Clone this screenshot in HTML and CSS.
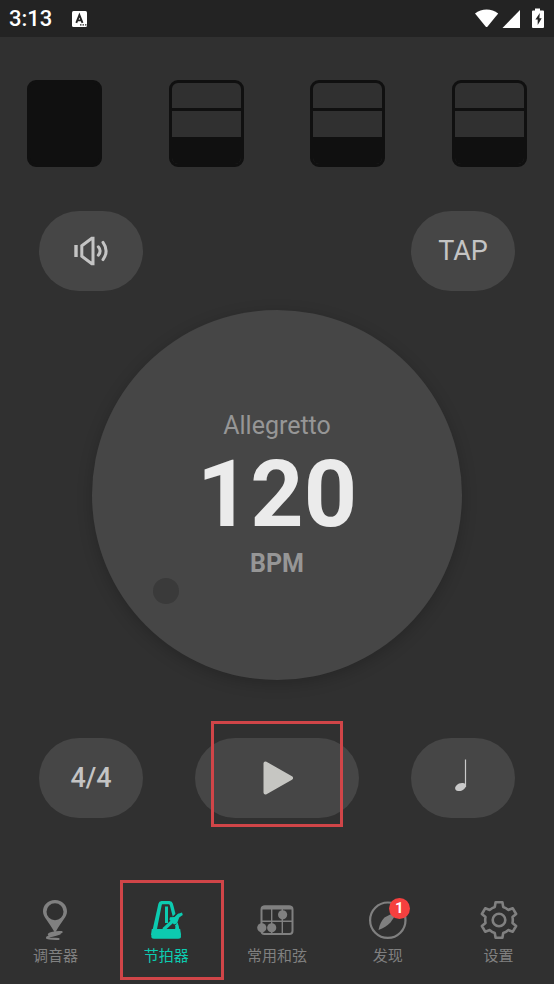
FILE: index.html
```html
<!DOCTYPE html>
<html lang="zh-CN">
<head>
<meta charset="utf-8">
<meta name="viewport" content="width=device-width, initial-scale=1">
<title>节拍器</title>
<link rel="stylesheet" href="styles.css">
</head>
<body>
<header class="status">
  <time class="clock">3:13</time>
  <svg class="app-badge" width="15" height="16" viewBox="0 0 15 16" aria-hidden="true">
    <rect width="15" height="16" rx="1.5" fill="#fff"/>
    <path d="M4.3 11.8 7.4 4l3.1 7.8M5.4 9.4h4" fill="none" stroke="#232323" stroke-width="1.9"/>
    <path d="M8 13.9h1.5m1 0H12m1 0h1.5" stroke="#232323" stroke-width="1.2"/>
  </svg>
  <svg class="signals" width="70" height="20" viewBox="0 0 70 20" aria-hidden="true">
    <path d="M1 4.6C7.600-.8 17.600-.8 24.200 4.600L13.600 17.400q-1 1-2 0Z" fill="#fff"/>
    <path d="M46 1v18H28.500Z" fill="#fff"/>
    <path d="M61-.5h5v2h3q1 0 1 1V18q0 1-1 1H59q-1 0-1-1V2.500q0-1 1-1h2Z" fill="#fff"/>
    <path d="m65.800 4-4.400 6.500h2.300v5.500l4-6.800h-2.300Z" fill="#232323"/>
  </svg>
</header>

<main class="metronome">
  <div class="beats">
    <button class="beat beat-full" aria-label="1"></button>
    <button class="beat" aria-label="2"><span class="level"></span><span class="level"></span><span class="level level-on"></span></button>
    <button class="beat" aria-label="3"><span class="level"></span><span class="level"></span><span class="level level-on"></span></button>
    <button class="beat" aria-label="4"><span class="level"></span><span class="level"></span><span class="level level-on"></span></button>
  </div>

  <div class="controls controls-top">
    <button class="pill" aria-label="音量">
      <svg width="36" height="30" viewBox="0 0 36 30" fill="none" stroke="#c4c4c4" stroke-width="3">
        <path d="M3 9v12" stroke-width="3.400"/>
        <path d="M8.800 9.700 18.800 2.300h1.200v25.400h-1.200L8.800 20.300Z"/>
        <path d="M25.300 10.800q3.600 4.200 0 8.400" stroke-width="3" stroke-linecap="round"/>
        <path d="M30 6.400q6.200 8.600 0 17.200" stroke-width="3" stroke-linecap="round"/>
      </svg>
    </button>
    <button class="pill pill-text">TAP</button>
  </div>

  <section class="dial">
    <p class="tempo-name">Allegretto</p>
    <p class="tempo">120</p>
    <p class="unit">BPM</p>
    <span class="knob"></span>
  </section>

  <div class="controls controls-bottom">
    <button class="pill pill-text pill-medium">4/4</button>
    <button class="pill pill-wide" aria-label="播放">
      <svg width="32" height="36" viewBox="0 0 32 36" aria-hidden="true">
        <path d="M4.500 3.500v29L30 18Z" fill="#c6c6c2" stroke="#c6c6c2" stroke-width="4" stroke-linejoin="round"/>
      </svg>
      <span class="mark mark-play"></span>
    </button>
    <button class="pill" aria-label="四分音符">
      <svg width="18" height="36" viewBox="0 0 18 36" aria-hidden="true">
        <path d="M11.500-.5V27" stroke="#c9c9c9" stroke-width="1.200"/>
        <ellipse cx="6.500" cy="27" rx="5.700" ry="3.700" fill="#c9c9c9" transform="rotate(-24 6.500 27)"/>
      </svg>
    </button>
  </div>
</main>

<nav class="tabs">
  <a class="tab" href="#tuner">
    <svg class="tab-icon" viewBox="0 0 40 40" aria-hidden="true">
      <path fill-rule="evenodd" fill="#808080" d="M20 0C12.800 0 8 5.200 8 11.600 8 17 13.200 21 19.300 31.700q.7 1 1.400 0C26.800 21 32 17 32 11.600 32 5.200 27.200 0 20 0Zm0 3.300a8.500 8.500 0 1 1 0 17 8.500 8.500 0 0 1 0-17Z"/>
      <path fill="none" stroke="#808080" stroke-width="2.200" stroke-linecap="round" stroke-linejoin="round" d="M26.500 32.200C21 31.600 13 33.500 14 34.700c1.500 1 7-.7 10.800-1.200C20 35.700 11.500 36.500 12 38c.6 1 6 .9 11.500 1"/>
    </svg>
    <span>调音器</span>
  </a>
  <a class="tab tab-active" href="#metronome" aria-current="page">
    <svg class="tab-icon" viewBox="0 0 40 40" aria-hidden="true">
      <path fill="#0ccbb0" d="M15.500 1h8q2.700 0 3.400 2.700l8 31.500q.7 3.500-2.700 3.500H8q-3.300 0-2.600-3.500l7-31.500Q13 1 15.500 1Z"/>
      <path fill="#303030" d="M16.500 4.300h6.200q.9 0 1.100.9L30 29H11l4.700-23.800q.1-.9.800-.9Z"/>
      <path d="M18 30 37 12.500" stroke="#303030" stroke-width="8"/>
      <path d="M20.500 6.500V23" stroke="#0ccbb0" stroke-width="3"/>
      <path d="M5.800 29h28.400l.8 6H5ZM29 29l2.500-6.500 1.500 6.500Z" fill="#0ccbb0"/>
      <path d="m17.500 29.500 16-14.800" stroke="#0ccbb0" stroke-width="3.400"/>
      <path d="m32.300 13.800 3.700-1.400.8 2.600-3.500 2.300-2.300 6.100-3 1.200-4.600-5 .6-2.400 5.300-.2Z" fill="#0ccbb0"/>
    </svg>
    <span>节拍器</span>
    <span class="mark mark-tab"></span>
  </a>
  <a class="tab" href="#chords">
    <svg class="tab-icon" viewBox="0 0 40 40" aria-hidden="true">
      <rect x="4.500" y="6.500" width="31" height="27.500" rx="3" fill="none" stroke="#808080" stroke-width="2"/>
      <path d="M4 9.500q0-4 4-4h24q4 0 4 4Z" fill="#808080"/>
      <path d="M14.700 8v26M25.300 8v26M4 21.300h32" stroke="#808080" stroke-width="1.400"/>
      <circle cx="25.600" cy="14.800" r="4.600" fill="#808080"/>
      <circle cx="4.800" cy="27.800" r="4.600" fill="#808080"/>
      <circle cx="14.700" cy="27.800" r="4.600" fill="#808080"/>
    </svg>
    <span>常用和弦</span>
  </a>
  <a class="tab" href="#discover">
    <span class="icon-wrap">
      <svg class="tab-icon" viewBox="0 0 40 40" aria-hidden="true">
        <circle cx="19.800" cy="20.200" r="17.700" fill="none" stroke="#808080" stroke-width="2.200"/>
        <path d="M10.500 30Q12 22 16.500 17.500L31 10 22.500 22.500Q18 27 10.500 30Z" fill="#808080"/>
      </svg>
      <span class="badge">1</span>
    </span>
    <span>发现</span>
  </a>
  <a class="tab" href="#settings">
    <svg class="tab-icon" viewBox="0 0 40 40" fill="none" stroke="#808080" stroke-width="2.600" stroke-linejoin="round" aria-hidden="true">
      <path d="M16.600 2.300h6.800l.8 4.600q3 1 5 3l4.600-1.600 3.300 5.700-3.600 3q.6 3 0 6l3.600 3-3.300 5.700-4.600-1.600q-2 2-5 3l-.8 4.600h-6.800l-.8-4.600q-3-1-5-3l-4.600 1.600L2.900 26l3.600-3q-.6-3 0-6l-3.600-3 3.300-5.700 4.600 1.600q2-2 5-3Z"/>
      <circle cx="20" cy="20" r="6.300"/>
    </svg>
    <span>设置</span>
  </a>
</nav>
</body>
</html>
```
FILE: styles.css
```css
* {
  box-sizing: border-box;
}

body {
  margin: 0;
  min-height: 100vh;
  display: flex;
  flex-direction: column;
  background: #303030;
  color: #c4c4c4;
  font-family: Roboto, "Noto Sans CJK SC", sans-serif;
}

button {
  margin: 0;
  padding: 0;
  border: 0;
  color: inherit;
  font: inherit;
}

p {
  margin: 0;
}

svg {
  display: block;
  overflow: visible;
}

.status {
  display: flex;
  align-items: center;
  height: 37px;
  padding: 0 10px 0 9px;
  background: #232323;
  color: #fff;
}

.clock {
  font-size: 22px;
  font-weight: 500;
  line-height: 24px;
}

.app-badge {
  margin-left: 20px;
}

.signals {
  margin-left: auto;
}

.metronome {
  display: flex;
  flex-direction: column;
}

.beats {
  display: flex;
  justify-content: space-between;
  margin-top: 43px;
  padding: 0 27px;
}

.beat {
  display: grid;
  grid-template-rows: 25fr 29fr 27fr;
  width: 75px;
  height: 87px;
  overflow: hidden;
  border: 3px solid #101010;
  border-radius: 9px;
  background: #303030;
}

.beat-full {
  background: #101010;
}

.level + .level {
  border-top: 3px solid #101010;
}

.level-on {
  background: #101010;
}

.controls {
  display: flex;
  justify-content: space-between;
  padding: 0 39px;
}

.controls-top {
  margin-top: 44px;
}

.controls-bottom {
  margin-top: 58px;
}

.pill {
  position: relative;
  display: flex;
  align-items: center;
  justify-content: center;
  width: 104px;
  height: 80px;
  border-radius: 40px;
  background: #464646;
}

.pill-wide {
  width: 164px;
}

.pill-text {
  padding-bottom: 1px;
  font-size: 27px;
}

.pill-medium {
  font-weight: 500;
}

.dial {
  position: relative;
  display: flex;
  flex-direction: column;
  align-items: center;
  gap: 6px;
  align-self: center;
  width: 370px;
  height: 370px;
  margin-top: 19px;
  padding-top: 100px;
  border-radius: 50%;
  background: #464646;
  box-shadow: 0 4px 16px rgba(0, 0, 0, 0.2);
}

.tempo-name,
.unit {
  color: #969696;
  font-size: 25px;
  line-height: 32px;
}

.unit {
  font-weight: 700;
}

.tempo {
  color: #ebebeb;
  font-size: 93px;
  font-weight: 700;
  line-height: 94px;
}

.knob {
  position: absolute;
  left: 20%;
  top: 76%;
  width: 26px;
  height: 26px;
  border-radius: 50%;
  background: #3a3a3a;
  transform: translate(-50%, -50%);
}

.mark {
  position: absolute;
  border: 3px solid #d04548;
  pointer-events: none;
}

.mark-play {
  inset: -17px 16px -9px;
}

.mark-tab {
  inset: -20px -2px -14px 9px;
}

.tabs {
  display: grid;
  grid-template-columns: repeat(5, 1fr);
  margin-top: auto;
  padding-bottom: 18px;
}

.tab {
  position: relative;
  display: flex;
  flex-direction: column;
  align-items: center;
  gap: 6px;
  color: #808080;
  font-size: 15px;
  line-height: 20px;
  text-decoration: none;
}

.tab-active {
  color: #0ccbb0;
}

.tab-icon {
  width: 40px;
  height: 40px;
}

.icon-wrap {
  position: relative;
}

.badge {
  position: absolute;
  top: -2px;
  right: -2px;
  width: 21px;
  height: 21px;
  border-radius: 50%;
  background: #f5403f;
  color: #fff;
  font-size: 15px;
  font-weight: 700;
  line-height: 21px;
  text-align: center;
}
```
